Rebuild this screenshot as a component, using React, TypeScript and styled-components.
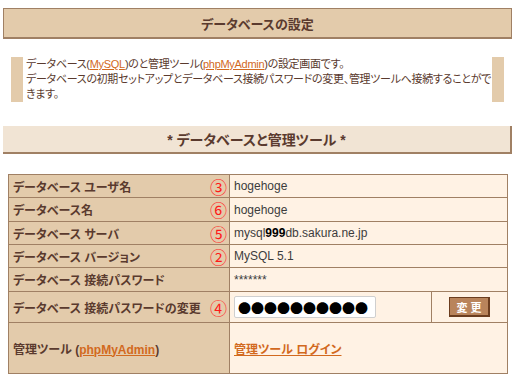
import styled, { createGlobalStyle } from "styled-components";

const Global = createGlobalStyle`
  body {
    margin: 0;
    background: #ffffff;
    font-family: "Liberation Sans", "Noto Sans CJK JP", sans-serif;
    font-feature-settings: "palt";
    color: #5a3a2e;
  }
`;

const Page = styled.div`
  width: 509px;
  padding: 8px 3px 10px 3px;
`;

const TitleBar = styled.h1`
  margin: 0;
  height: 28px;
  border: 1px solid #a08064;
  border-bottom-width: 2px;
  background: #e3cbab;
  display: flex;
  align-items: center;
  justify-content: center;
  font-size: 13px;
  font-weight: bold;
  color: #5a3a2e;
`;

const Notice = styled.div`
  margin: 18px 8px 0 8px;
  border-left: 12px solid #e3cbab;
  border-right: 12px solid #e3cbab;
  padding-left: 3px;
  font-size: 11px;
  letter-spacing: -0.3px;
  line-height: 15px;
  white-space: nowrap;
  overflow: hidden;
  color: #5a3a2e;
`;

const Link = styled.a<{ $bold?: boolean }>`
  color: #d2691e;
  text-decoration: underline;
  font-weight: ${(p) => (p.$bold ? "bold" : "normal")};
`;

const SectionBar = styled.h2`
  margin: 24px 0 0 0;
  height: 26px;
  background: #f1e4d4;
  border-right: 2px solid #a08064;
  border-bottom: 2px solid #a08064;
  display: flex;
  align-items: center;
  justify-content: center;
  font-size: 14px;
  font-weight: bold;
  color: #5a3a2e;
`;

const Table = styled.table`
  margin: 20px 5px 0 5px;
  width: 499px;
  border-collapse: collapse;
  table-layout: fixed;
  border: 1px solid #a08064;
`;

const Row = styled.tr<{ $h: number }>`
  height: ${(p) => p.$h}px;
`;

const Label = styled.th`
  background: #e3cbab;
  border: 1px solid #a08064;
  padding: 0 2px 0 4px;
  text-align: left;
  font-size: 12px;
  font-weight: bold;
  color: #5a3a2e;
`;

const LabelInner = styled.div`
  display: flex;
  align-items: center;
  justify-content: space-between;
`;

const Mark = styled.span`
  display: block;
  height: 17px;
  color: #ff1a1a;
  font-family: "Noto Sans CJK JP", sans-serif;
  font-size: 17px;
  font-weight: normal;
  line-height: 17px;
`;

const Value = styled.td`
  background: #fff2e4;
  border: 1px solid #a08064;
  padding: 0 4px;
  font-size: 12px;
  color: #3c3c3c;
`;

const ButtonCell = styled.td`
  background: #fff2e4;
  border: 1px solid #a08064;
  text-align: center;
`;

const PassInput = styled.input`
  width: 142px;
  height: 22px;
  box-sizing: border-box;
  border: 1px solid #cfcfcf;
  border-radius: 2px;
  background: #ffffff;
  padding: 0 3px;
  font-family: "Noto Sans CJK JP", sans-serif;
  font-feature-settings: normal;
  font-size: 13px;
  letter-spacing: 0;
  color: #000000;
  outline: none;
`;

const ChangeButton = styled.button`
  width: 41px;
  height: 20px;
  background: #b9845b;
  border: 1px solid #6b3d1f;
  border-right-width: 2px;
  border-bottom-width: 2px;
  color: #ffffff;
  font-family: "Noto Sans CJK JP", sans-serif;
  font-size: 11px;
  font-weight: bold;
  padding: 0;
  letter-spacing: 3px;
  text-indent: 3px;
  cursor: pointer;
`;

const rows = [
  { label: "データベース ユーザ名", mark: "③", value: "hogehoge", h: 23 },
  { label: "データベース名", mark: "⑥", value: "hogehoge", h: 24 },
  {
    label: "データベース サーバ",
    mark: "⑤",
    value: (
      <>
        mysql<b style={{ color: "#000" }}>999</b>db.sakura.ne.jp
      </>
    ),
    h: 23,
  },
  { label: "データベース バージョン", mark: "②", value: "MySQL 5.1", h: 23 },
  { label: "データベース 接続パスワード", mark: "", value: "*******", h: 24 },
];

export default function App() {
  return (
    <Page>
      <Global />
      <TitleBar>データベースの設定</TitleBar>
      <Notice>
        データベース(<Link href="#">MySQL</Link>)のと管理ツール(
        <Link href="#">phpMyAdmin</Link>)の設定画面です。
        <br />
        データベースの初期セットアップとデータベース接続パスワードの変更、管理ツールへ接続することがで
        <br />
        きます。
      </Notice>
      <SectionBar>* データベースと管理ツール *</SectionBar>
      <Table>
        <colgroup>
          <col style={{ width: 221 }} />
          <col style={{ width: 202 }} />
          <col style={{ width: 76 }} />
        </colgroup>
        <tbody>
          {rows.map((r) => (
            <Row $h={r.h} key={r.label}>
              <Label>
                <LabelInner>
                  <span>{r.label}</span>
                  <Mark>{r.mark}</Mark>
                </LabelInner>
              </Label>
              <Value colSpan={2}>{r.value}</Value>
            </Row>
          ))}
          <Row $h={31}>
            <Label>
              <LabelInner>
                <span>データベース 接続パスワードの変更</span>
                <Mark>④</Mark>
              </LabelInner>
            </Label>
            <Value>
              <PassInput readOnly value="●●●●●●●●●●" />
            </Value>
            <ButtonCell>
              <ChangeButton>変更</ChangeButton>
            </ButtonCell>
          </Row>
          <Row $h={51}>
            <Label>
              管理ツール (<Link href="#" $bold>phpMyAdmin</Link>)
            </Label>
            <Value colSpan={2}>
              <Link href="#" $bold style={{ fontSize: 12 }}>
                管理ツール ログイン
              </Link>
            </Value>
          </Row>
        </tbody>
      </Table>
    </Page>
  );
}
